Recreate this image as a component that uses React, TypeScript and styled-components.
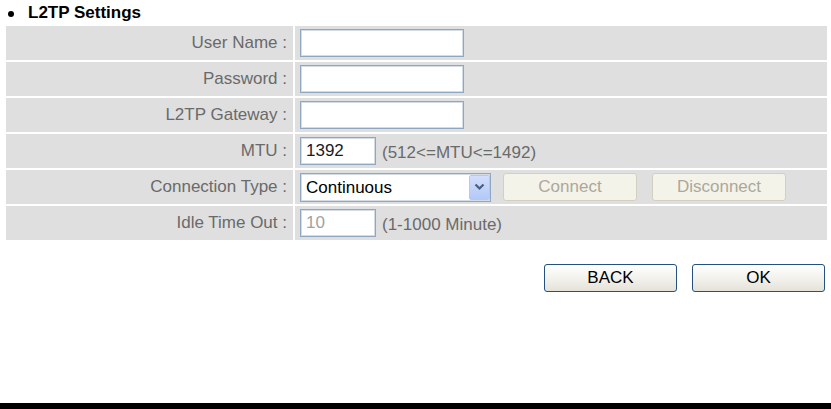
import React from 'react';
import styled, { createGlobalStyle } from 'styled-components';

const GlobalStyle = createGlobalStyle`
  html, body {
    margin: 0;
    padding: 0;
    background: #ffffff;
  }
  body {
    font-family: "Liberation Sans", Arial, sans-serif;
  }
`;

// --- Page frame ---

const Page = styled.div`
  display: flex;
  flex-direction: column;
  height: 100vh;
  width: 831px;
`;

const Content = styled.div`
  flex: 1;
  padding: 0 4px 0 6px;
`;

const BottomBar = styled.div`
  height: 6px;
  background: #000000;
`;

// --- Section title ---

const Title = styled.div`
  display: flex;
  align-items: center;
  height: 26px;
  font-size: 17px;
  font-weight: bold;
  color: #000;
`;

const Bullet = styled.span`
  width: 6px;
  height: 6px;
  border-radius: 50%;
  background: #000;
  margin: 2px 14px 0 2px;
`;

// --- Settings grid ---

const Form = styled.div`
  display: grid;
  grid-template-columns: 287px 1fr;
  grid-auto-rows: 34px;
  gap: 2px;
  width: 821px;
`;

const Label = styled.div`
  display: flex;
  align-items: center;
  justify-content: flex-end;
  padding-right: 6px;
  background: #dfdfdf;
  color: #6a6a6a;
  font-size: 17px;
  white-space: nowrap;
`;

const Value = styled.div`
  display: flex;
  align-items: center;
  padding-left: 5px;
  background: #dfdfdf;
`;

const TextInput = styled.input<{ $w: number }>`
  box-sizing: border-box;
  width: ${({ $w }) => $w}px;
  height: 28px;
  margin: 0;
  padding: 0 5px;
  border: 1px solid #8fa7c1;
  box-shadow: inset 0 0 0 1px #d3dde8;
  background: #ffffff;
  font-family: "Liberation Sans", Arial, sans-serif;
  font-size: 17px;
  color: #1a1a2a;
  outline: none;

  &:disabled {
    color: #a2a2a2;
  }
`;

const Hint = styled.span`
  margin-left: 6px;
  color: #6a6a6a;
  font-size: 17px;
  padding-top: 4px;
`;

const SelectWrap = styled.div`
  position: relative;
  width: 191px;
  height: 29px;
`;

const Select = styled.select`
  box-sizing: border-box;
  appearance: none;
  width: 100%;
  height: 100%;
  margin: 0;
  padding: 0 0 0 5px;
  border: 1px solid #8fa7c1;
  box-shadow: inset 0 0 0 1px #d3dde8;
  background: #ffffff;
  font-family: "Liberation Sans", Arial, sans-serif;
  font-size: 17px;
  color: #000;
  outline: none;
`;

const SelectArrow = styled.span`
  position: absolute;
  top: 2px;
  right: 1px;
  width: 21px;
  height: 25px;
  box-sizing: border-box;
  border: 1px solid #b5c8f2;
  border-radius: 2px;
  background: linear-gradient(#d2defb, #b4c9f8);
  display: flex;
  align-items: center;
  justify-content: center;
  pointer-events: none;
`;

const StateButton = styled.button`
  width: 134px;
  height: 28px;
  margin-left: 12px;
  border: 1px solid #d3d0c0;
  border-radius: 3px;
  background: #f4f3ea;
  color: #aca899;
  font-family: "Liberation Sans", Arial, sans-serif;
  font-size: 17px;

  & + & {
    margin-left: 15px;
  }
`;

// --- Bottom actions ---

const Actions = styled.div`
  display: flex;
  justify-content: flex-end;
  gap: 15px;
  margin-top: 24px;
  width: 819px;
`;

const ActionButton = styled.button`
  width: 133px;
  height: 28px;
  border: 1px solid #24517f;
  border-radius: 3px;
  background: linear-gradient(#ffffff, #f0efe9 60%, #e4e2d8);
  color: #000;
  font-family: "Liberation Sans", Arial, sans-serif;
  font-size: 17px;
  padding: 0;
`;

const App: React.FC = () => {
  return (
    <Page>
      <GlobalStyle />
      <Content>
        <Title>
          <Bullet />
          L2TP Settings
        </Title>
        <Form>
          <Label>User Name :</Label>
          <Value>
            <TextInput $w={164} />
          </Value>

          <Label>Password :</Label>
          <Value>
            <TextInput $w={164} type="password" />
          </Value>

          <Label>L2TP Gateway :</Label>
          <Value>
            <TextInput $w={164} />
          </Value>

          <Label>MTU :</Label>
          <Value>
            <TextInput $w={76} defaultValue="1392" />
            <Hint>(512&lt;=MTU&lt;=1492)</Hint>
          </Value>

          <Label>Connection Type :</Label>
          <Value>
            <SelectWrap>
              <Select defaultValue="continuous">
                <option value="continuous">Continuous</option>
                <option value="demand">Connect On Demand</option>
                <option value="manual">Manual</option>
              </Select>
              <SelectArrow>
                <svg width="11" height="8" viewBox="0 0 11 8">
                  <path d="M1.5 1.5 L5.5 5.5 L9.5 1.5" fill="none" stroke="#4a5d82" strokeWidth="2.2" />
                </svg>
              </SelectArrow>
            </SelectWrap>
            <StateButton disabled>Connect</StateButton>
            <StateButton disabled>Disconnect</StateButton>
          </Value>

          <Label>Idle Time Out :</Label>
          <Value>
            <TextInput $w={76} defaultValue="10" disabled />
            <Hint>(1-1000 Minute)</Hint>
          </Value>
        </Form>
        <Actions>
          <ActionButton>BACK</ActionButton>
          <ActionButton>OK</ActionButton>
        </Actions>
      </Content>
      <BottomBar />
    </Page>
  );
};

export default App;
